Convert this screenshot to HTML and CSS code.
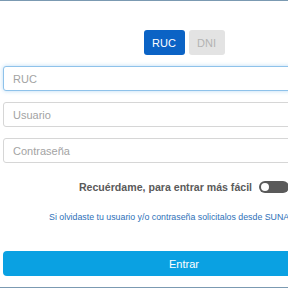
FILE: index.html
```html
<!DOCTYPE html>
<html lang="es">
<head>
<meta charset="utf-8">
<link rel="stylesheet" href="styles.css">
</head>
<body>
<div class="frame">
  <div class="panel">
    <div class="tabs">
      <button class="tab active">RUC</button>
      <button class="tab">DNI</button>
    </div>
    <input class="field focus" type="text" placeholder="RUC">
    <input class="field" type="text" placeholder="Usuario">
    <input class="field" type="password" placeholder="Contraseña">
    <div class="remember">
      <span>Recuérdame, para entrar más fácil</span>
      <span class="switch"><span class="knob"></span></span>
    </div>
    <p class="hint">Si olvidaste tu usuario y/o contraseña solicitalos desde SUNAT</p>
    <button class="submit">Entrar</button>
  </div>
</div>
</body>
</html>
```
FILE: styles.css
```css
html, body {
  margin: 0;
  padding: 0;
  overflow: hidden;
  background: #fff;
  font-family: "Liberation Sans", Arial, sans-serif;
}
.frame {
  width: 288px;
  height: 288px;
  box-sizing: border-box;
  border-top: 1px solid #7b9ab2;
  border-bottom: 1px solid #7b9ab2;
  overflow: hidden;
}
.panel {
  width: 362px;
  margin-left: 3px;
  display: flex;
  flex-direction: column;
  align-items: stretch;
}
.tabs {
  display: flex;
  justify-content: center;
  gap: 4px;
  margin-top: 29px;
}
.tab {
  height: 25px;
  border: 0;
  border-radius: 3px;
  font-family: inherit;
  font-size: 11px;
  padding: 0;
  background: #e3e3e3;
  color: #b3b3b3;
  width: 36px;
}
.tab.active {
  background: #0b63c5;
  color: #fff;
  width: 41px;
}
.field {
  height: 25px;
  box-sizing: border-box;
  border: 1px solid #d6d6d6;
  border-radius: 3px;
  padding: 0 9px;
  font-family: inherit;
  font-size: 11px;
  color: #555;
  margin-top: 11px;
  outline: none;
}
.field::placeholder { color: #a3a3a3; }
.field.focus {
  border-color: #8ec2ea;
  box-shadow: 0 0 4px rgba(102, 175, 233, 0.45);
}
.remember {
  display: flex;
  justify-content: center;
  align-items: center;
  gap: 7px;
  margin-top: 18px;
  font-size: 10.6px;
  font-weight: bold;
  color: #5a5a5a;
  height: 12px;
}
.switch {
  width: 30px;
  height: 12px;
  border-radius: 6px;
  background: #5a5a5a;
  display: flex;
  align-items: center;
  padding-left: 2px;
  box-sizing: border-box;
}
.knob {
  width: 8px;
  height: 8px;
  border-radius: 50%;
  background: #fff;
}
.hint {
  margin: 19px 0 0;
  padding-right: 25px;
  text-align: center;
  font-size: 8.8px;
  color: #2e70b8;
  line-height: 11px;
  white-space: nowrap;
}
.submit {
  margin-top: 28px;
  height: 25px;
  border: 0;
  border-radius: 4px;
  background: #0aa1e2;
  color: #fff;
  font-family: inherit;
  font-size: 11px;
  padding: 0;
}
```
